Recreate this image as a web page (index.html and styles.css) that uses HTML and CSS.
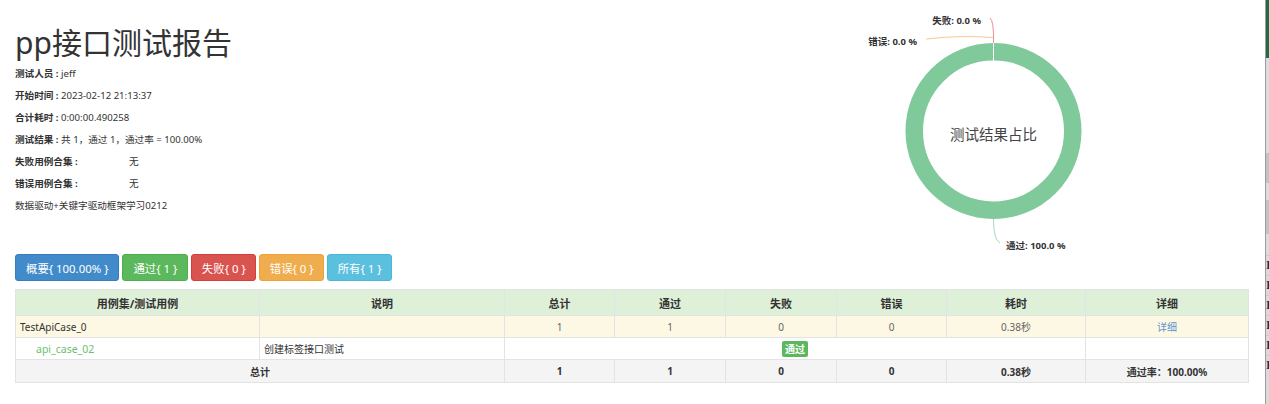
FILE: index.html
```html
<!DOCTYPE html>
<html lang="zh-CN">
<head>
    <meta charset="UTF-8">
    <title>pp接口测试报告</title>
    <link rel="stylesheet" href="styles.css">
</head>
<body>

<div class="page">
    <!-- Header: summary + chart -->
    <div class="header">
        <div class="summary">
            <h1 class="title">pp接口测试报告</h1>
            <p class="attr"><strong>测试人员 : </strong>jeff</p>
            <p class="attr"><strong>开始时间 : </strong>2023-02-12 21:13:37</p>
            <p class="attr"><strong>合计耗时 : </strong>0:00:00.490258</p>
            <p class="attr"><strong>测试结果 : </strong>共 1，通过 1，通过率 = 100.00%</p>
            <p class="attr"><strong class="label-wide">失败用例合集 :</strong>无</p>
            <p class="attr"><strong class="label-wide">错误用例合集 :</strong>无</p>
            <p class="attr">数据驱动+关键字驱动框架学习0212</p>
        </div>

        <svg class="chart" width="400" height="252" viewBox="0 0 400 252">
            <circle cx="193.5" cy="131" r="79.25" fill="none" stroke="#80c99b" stroke-width="17.5"/>
            <line x1="193.5" y1="42" x2="193.5" y2="61" stroke="#ffffff" stroke-width="1"/>
            <path d="M126 39 Q160 35 193.5 37.5" fill="none" stroke="#f9c98f" stroke-width="1"/>
            <path d="M190 18 Q194 21 193.5 43" fill="none" stroke="#ee8e98" stroke-width="1"/>
            <path d="M193.5 219 Q193.5 240 200 243" fill="none" stroke="#a6dbbb" stroke-width="1"/>
            <text class="pie-label" x="181" y="24" text-anchor="end">失败: 0.0 %</text>
            <text class="pie-label" x="117" y="45" text-anchor="end">错误: 0.0 %</text>
            <text class="pie-label" x="206" y="249">通过: 100.0 %</text>
            <text class="pie-title" x="193.5" y="139.5" text-anchor="middle">测试结果占比</text>
        </svg>
    </div>

    <!-- Filter buttons -->
    <div class="filters">
        <button class="btn btn-primary">概要{ 100.00% }</button>
        <button class="btn btn-success">通过{ 1 }</button>
        <button class="btn btn-danger">失败{ 0 }</button>
        <button class="btn btn-warning">错误{ 0 }</button>
        <button class="btn btn-info">所有{ 1 }</button>
    </div>

    <!-- Result table -->
    <table class="result-table">
        <colgroup>
            <col style="width: 244px">
            <col style="width: 245px">
            <col style="width: 110px">
            <col style="width: 111px">
            <col style="width: 111px">
            <col style="width: 110px">
            <col style="width: 139px">
            <col style="width: 163px">
        </colgroup>
        <thead>
            <tr>
                <th>用例集/测试用例</th>
                <th>说明</th>
                <th>总计</th>
                <th>通过</th>
                <th>失败</th>
                <th>错误</th>
                <th>耗时</th>
                <th>详细</th>
            </tr>
        </thead>
        <tbody>
            <tr class="suite-row">
                <td class="left">TestApiCase_0</td>
                <td></td>
                <td class="muted">1</td>
                <td class="muted">1</td>
                <td class="muted">0</td>
                <td class="muted">0</td>
                <td class="muted">0.38秒</td>
                <td><a class="detail-link" href="#">详细</a></td>
            </tr>
            <tr class="case-row">
                <td class="left case-name">api_case_02</td>
                <td class="left">创建标签接口测试</td>
                <td colspan="5"><span class="badge">通过</span></td>
                <td></td>
            </tr>
            <tr class="total-row">
                <td colspan="2">总计</td>
                <td>1</td>
                <td>1</td>
                <td>0</td>
                <td>0</td>
                <td>0.38秒</td>
                <td>通过率：100.00%</td>
            </tr>
        </tbody>
    </table>
</div>

<!-- neighbouring window edge -->
<div class="side-strip">
    <div class="seg seg-green"></div>
    <div class="seg seg-light" style="height: 95px"></div>
    <div class="seg seg-dark" style="height: 30px"></div>
    <div class="seg seg-light" style="height: 17px"></div>
    <div class="seg seg-dark" style="height: 34px"></div>
    <div class="seg seg-light" style="height: 21px"></div>
    <div class="seg seg-row">I</div>
    <div class="seg seg-row">I</div>
    <div class="seg seg-row">I</div>
    <div class="seg seg-row">I</div>
    <div class="seg seg-row">I</div>
    <div class="seg seg-row">I</div>
</div>

</body>
</html>
```

FILE: styles.css
```css
/* Global */
body {
    margin: 0;
    display: flex;
    font-family: "Noto Sans", "Noto Sans CJK SC", sans-serif;
    color: #333;
    background: #fff;
    height: 404px;
    overflow: hidden;
}

.page {
    flex: 1;
    padding: 0 16px 0 15px;
}

/* Header */
.header {
    display: grid;
    grid-template-columns: 785px 400px;
    height: 252px;
}

.summary {
    padding-top: 25px;
}

.title {
    margin: 0 0 2px;
    font-size: 30px;
    line-height: 36px;
    font-weight: 400;
    color: #333;
    font-family: "Noto Sans", "Noto Sans CJK SC", sans-serif;
}

.attr {
    margin: 0;
    font-size: 9.6px;
    line-height: 22px;
    color: #333;
}

.attr strong {
    font-weight: 700;
}

.label-wide {
    display: inline-block;
    width: 114px;
}

/* Chart */
.pie-label {
    font-size: 9.5px;
    font-weight: 700;
    fill: #333;
}

.pie-title {
    font-size: 14.5px;
    fill: #444;
}

/* Buttons */
.filters {
    display: flex;
    gap: 3px;
    margin-top: 2px;
}

.btn {
    height: 27px;
    padding: 0 9.5px;
    border: 1px solid transparent;
    border-radius: 3px;
    color: #fff;
    font-family: inherit;
    font-size: 11.4px;
    cursor: pointer;
}

.btn-primary { background: #428bca; border-color: #357ebd; padding: 0 10px; }
.btn-success { background: #5cb85c; border-color: #4cae4c; padding: 0 10px; }
.btn-danger  { background: #d9534f; border-color: #d43f3a; }
.btn-warning { background: #f0ad4e; border-color: #eea236; }
.btn-info    { background: #5bc0de; border-color: #46b8da; }

/* Table */
.result-table {
    width: 1233px;
    margin-top: 8px;
    border-collapse: collapse;
    table-layout: fixed;
    font-size: 10px;
}

.result-table th,
.result-table td {
    border: 1px solid #e3e3e3;
    padding: 0 4px;
    text-align: center;
    vertical-align: middle;
    white-space: nowrap;
}

.result-table th {
    height: 25px;
    background: #dff0d8;
    font-size: 11px;
    font-weight: 700;
}

.result-table td {
    height: 21px;
}

.result-table td.left {
    text-align: left;
}

.suite-row td {
    background: #fcf8e3;
}

.suite-row .muted {
    color: #666;
}

.case-name {
    padding-left: 20px !important;
    color: #6bbf6b;
    font-size: 10.5px;
}

.total-row td {
    height: 22px;
    background: #f4f4f4;
    font-weight: 700;
}

.detail-link {
    color: #5d94cf;
    text-decoration: none;
}

.badge {
    display: inline-block;
    padding: 0 3px;
    line-height: 16px;
    border-radius: 2px;
    background: #5cb85c;
    color: #fff;
    font-weight: 700;
    font-size: 10px;
}

/* Right window edge */
.side-strip {
    width: 4px;
    flex: none;
    border-left: 1px solid #9c9c9c;
    background: #dadada;
    display: flex;
    flex-direction: column;
}

.seg-green {
    height: 58px;
    background: #1f6b42;
}

.seg-light {
    background: #dcdcdc;
}

.seg-dark {
    background: #c3c3c3;
}

.seg-row {
    height: 19px;
    border-top: 1px solid #c9c9c9;
    font-family: "Liberation Serif", serif;
    font-weight: 700;
    font-size: 12px;
    line-height: 19px;
    color: #1c2f55;
    overflow: hidden;
}
```
